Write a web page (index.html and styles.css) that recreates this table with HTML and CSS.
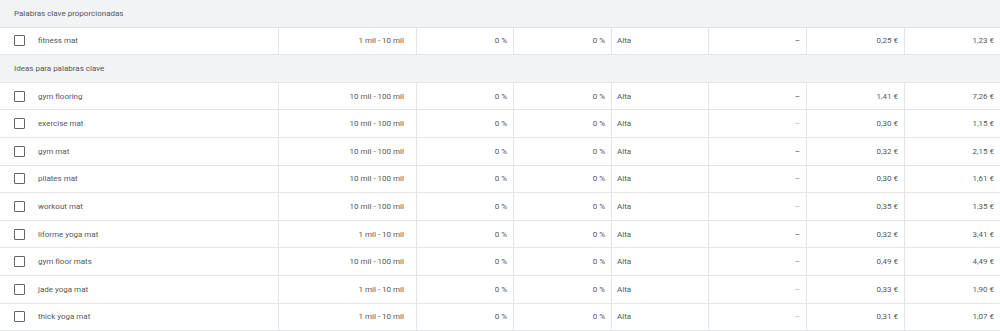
FILE: index.html
```html
<!DOCTYPE html>
<html lang="es">
<head>
<meta charset="utf-8">
<title>Palabras clave</title>
<link rel="stylesheet" href="styles.css">
</head>
<body>
<div class="table">
  <div class="group">Palabras clave proporcionadas</div>
  <div class="row">
    <div class="cell kw"><span class="cb"></span><span>fitness mat</span></div>
    <div class="cell num">1 mil - 10 mil</div>
    <div class="cell num">0 %</div>
    <div class="cell num">0 %</div>
    <div class="cell txt">Alta</div>
    <div class="cell num dash">–</div>
    <div class="cell num">0,25 €</div>
    <div class="cell num">1,23 €</div>
  </div>
  <div class="group">Ideas para palabras clave</div>
  <div class="row">
    <div class="cell kw"><span class="cb"></span><span>gym flooring</span></div>
    <div class="cell num">10 mil - 100 mil</div>
    <div class="cell num">0 %</div>
    <div class="cell num">0 %</div>
    <div class="cell txt">Alta</div>
    <div class="cell num dash">–</div>
    <div class="cell num">1,41 €</div>
    <div class="cell num">7,26 €</div>
  </div>
  <div class="row">
    <div class="cell kw"><span class="cb"></span><span>exercise mat</span></div>
    <div class="cell num">10 mil - 100 mil</div>
    <div class="cell num">0 %</div>
    <div class="cell num">0 %</div>
    <div class="cell txt">Alta</div>
    <div class="cell num dash light">–</div>
    <div class="cell num">0,30 €</div>
    <div class="cell num">1,15 €</div>
  </div>
  <div class="row">
    <div class="cell kw"><span class="cb"></span><span>gym mat</span></div>
    <div class="cell num">10 mil - 100 mil</div>
    <div class="cell num">0 %</div>
    <div class="cell num">0 %</div>
    <div class="cell txt">Alta</div>
    <div class="cell num dash">–</div>
    <div class="cell num">0,32 €</div>
    <div class="cell num">2,15 €</div>
  </div>
  <div class="row">
    <div class="cell kw"><span class="cb"></span><span>pilates mat</span></div>
    <div class="cell num">10 mil - 100 mil</div>
    <div class="cell num">0 %</div>
    <div class="cell num">0 %</div>
    <div class="cell txt">Alta</div>
    <div class="cell num dash mid">–</div>
    <div class="cell num">0,30 €</div>
    <div class="cell num">1,61 €</div>
  </div>
  <div class="row">
    <div class="cell kw"><span class="cb"></span><span>workout mat</span></div>
    <div class="cell num">10 mil - 100 mil</div>
    <div class="cell num">0 %</div>
    <div class="cell num">0 %</div>
    <div class="cell txt">Alta</div>
    <div class="cell num dash light">–</div>
    <div class="cell num">0,35 €</div>
    <div class="cell num">1,35 €</div>
  </div>
  <div class="row">
    <div class="cell kw"><span class="cb"></span><span>liforme yoga mat</span></div>
    <div class="cell num">1 mil - 10 mil</div>
    <div class="cell num">0 %</div>
    <div class="cell num">0 %</div>
    <div class="cell txt">Alta</div>
    <div class="cell num dash">–</div>
    <div class="cell num">0,32 €</div>
    <div class="cell num">3,41 €</div>
  </div>
  <div class="row">
    <div class="cell kw"><span class="cb"></span><span>gym floor mats</span></div>
    <div class="cell num">10 mil - 100 mil</div>
    <div class="cell num">0 %</div>
    <div class="cell num">0 %</div>
    <div class="cell txt">Alta</div>
    <div class="cell num dash mid">–</div>
    <div class="cell num">0,49 €</div>
    <div class="cell num">4,49 €</div>
  </div>
  <div class="row">
    <div class="cell kw"><span class="cb"></span><span>jade yoga mat</span></div>
    <div class="cell num">1 mil - 10 mil</div>
    <div class="cell num">0 %</div>
    <div class="cell num">0 %</div>
    <div class="cell txt">Alta</div>
    <div class="cell num dash light">–</div>
    <div class="cell num">0,33 €</div>
    <div class="cell num">1,90 €</div>
  </div>
  <div class="row">
    <div class="cell kw"><span class="cb"></span><span>thick yoga mat</span></div>
    <div class="cell num">1 mil - 10 mil</div>
    <div class="cell num">0 %</div>
    <div class="cell num">0 %</div>
    <div class="cell txt">Alta</div>
    <div class="cell num dash light">–</div>
    <div class="cell num">0,31 €</div>
    <div class="cell num">1,07 €</div>
  </div>
</div>
</body>
</html>
```

FILE: styles.css
```css
html, body {
  margin: 0;
  padding: 0;
  background: #ffffff;
}
body {
  font-family: Roboto, "Liberation Sans", sans-serif;
  font-size: 8px;
  color: #54585c;
}
.table {
  width: 1000px;
  display: flex;
  flex-direction: column;
}
.group {
  box-sizing: border-box;
  height: 27.6px;
  display: flex;
  align-items: center;
  padding-left: 14px;
  background: #f1f3f4;
  border-bottom: 1px solid #e3e5e7;
}
.row {
  box-sizing: border-box;
  height: 27.6px;
  display: grid;
  grid-template-columns: 278px 138px 97px 98px 97px 98px 98px 96px;
  border-bottom: 1px solid #e3e5e7;
  background: #ffffff;
}
.cell {
  display: flex;
  align-items: center;
  min-width: 0;
  white-space: nowrap;
}
.cell + .cell {
  border-left: 1px solid #e3e5e7;
}
.kw {
  padding-left: 14px;
  gap: 13px;
}
.cb {
  box-sizing: border-box;
  width: 11px;
  height: 11px;
  border: 1.5px solid #62666a;
  border-radius: 1px;
  flex: none;
}
.num {
  justify-content: flex-end;
  padding-right: 6px;
}
.num:nth-child(2) {
  padding-right: 12px;
}
.txt {
  padding-left: 5px;
}
.dash {
  color: #3c4043;
}
.dash.mid {
  color: #80868b;
}
.dash.light {
  color: #a6abb0;
}
```
